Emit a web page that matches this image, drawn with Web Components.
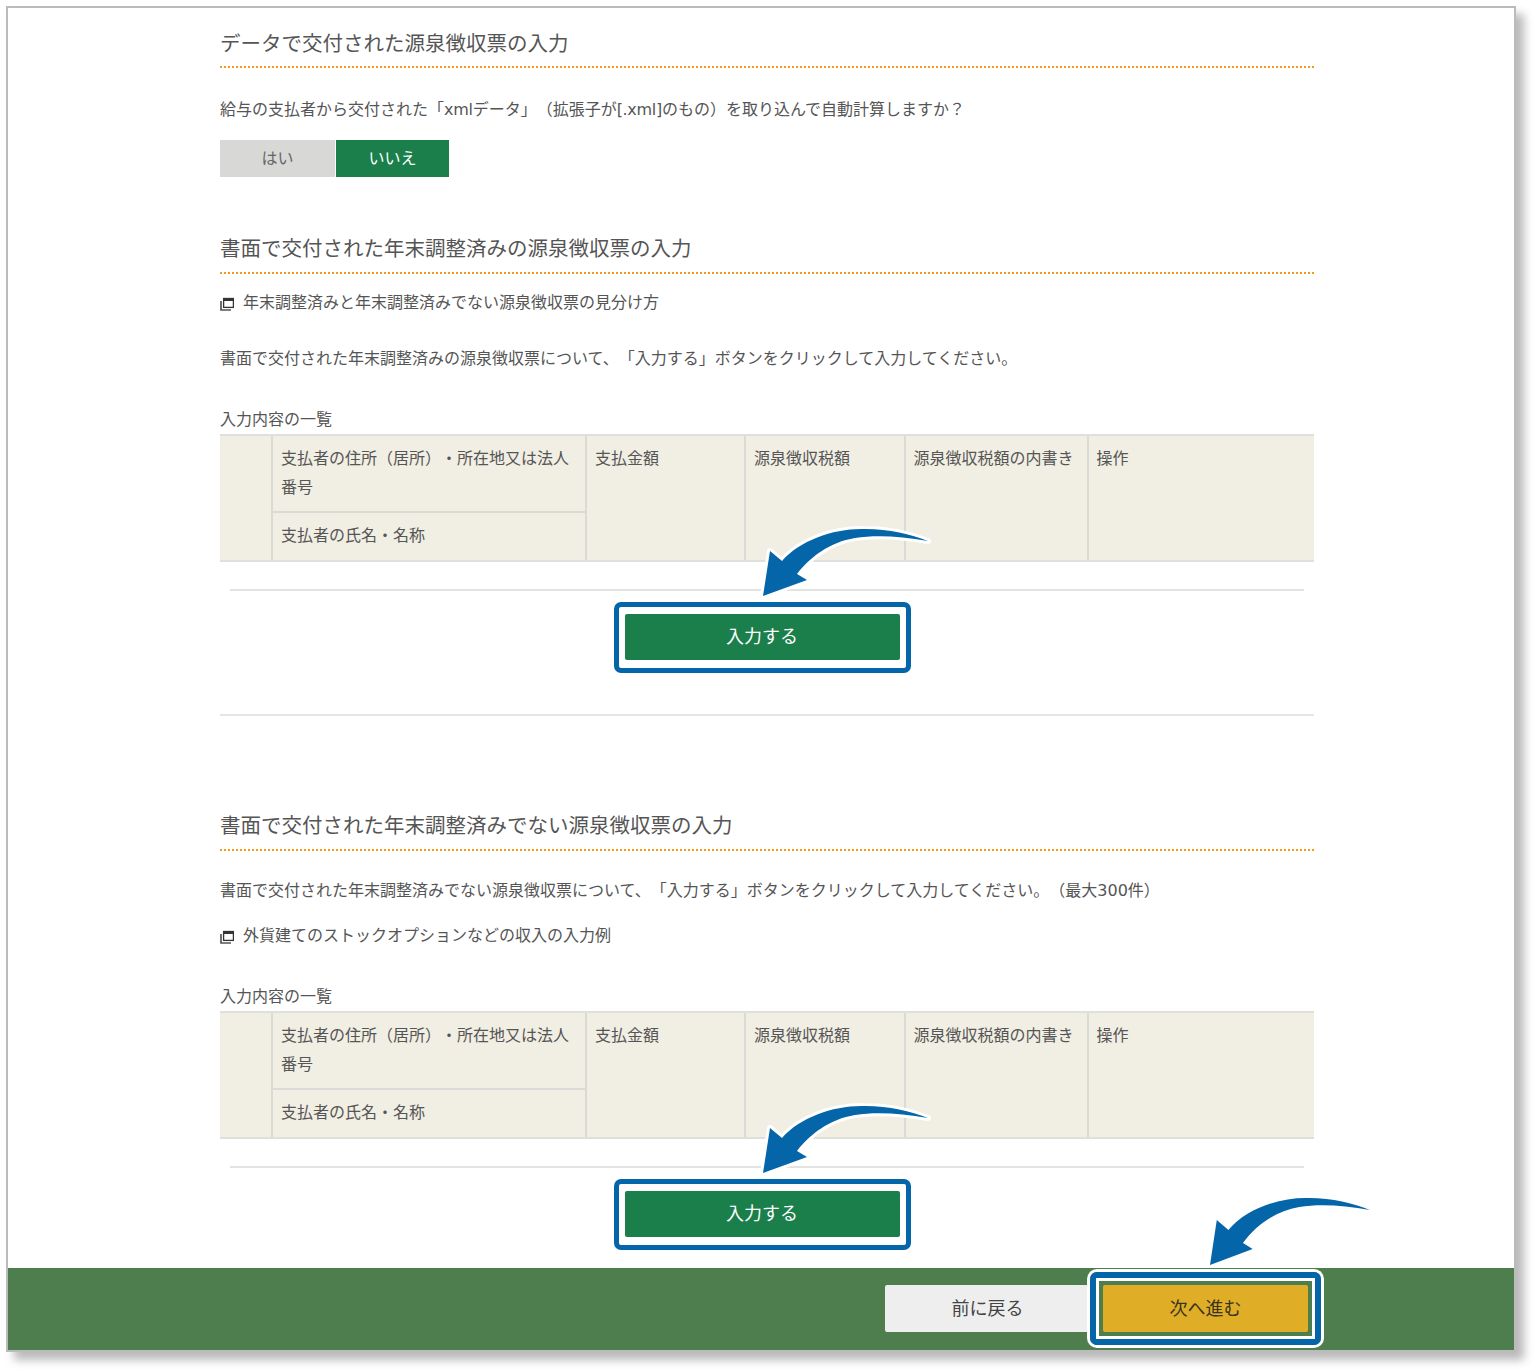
<!DOCTYPE html>
<html lang="ja">
<head>
<meta charset="utf-8">
<title>源泉徴収票の入力</title>
<style>
  html, body { margin: 0; padding: 0; background: #fff; min-height: 1370px; }
  body { font-family: "Noto Sans CJK JP", "Noto Sans", sans-serif; font-size: 16px; color: #555; overflow: hidden; text-spacing-trim: space-all; }
  .lat { font-family: "DejaVu Sans", sans-serif; line-height: 0; }
  .tight { letter-spacing: -.3px; }
  .first { padding-bottom: 9px; }
  .mt15 { margin-top: 15px; }
  .mt20 { margin-top: 20px; }
  .mt21 { margin-top: 21px; }
  .mt26 { margin-top: 26px; }
  .mt28 { margin-top: 28px; }
  .mt32 { margin-top: 32px; }
  .mt37 { margin-top: 37px; }
  .mt55 { margin-top: 55px; }
  .mt93 { margin-top: 93px; }
</style>
</head>
<body>

<template id="arrow-tpl">
  <svg width="190" height="84" viewBox="0 0 190 84" aria-hidden="true">
    <path class="edge" d="M8 74 L15 29 L27 39 C45 18 80 6 110 7 C135 7 155 12 173 19 C145 14 120 13 100 16 C75 20 55 35 42 52 L52 58 Z"/>
    <path class="fill" d="M8 74 L15 29 L27 39 C45 18 80 6 110 7 C135 7 155 12 173 19 C145 14 120 13 100 16 C75 20 55 35 42 52 L52 58 Z"/>
  </svg>
</template>

<app-frame>
  <sec-title class="first">データで交付された源泉徴収票の入力</sec-title>
  <body-text class="mt28">給与の支払者から交付された「<span class="lat tight">xml</span>データ」（拡張子が<span class="lat tight">[.xml]</span>のもの）を取り込んで自動計算しますか？</body-text>
  <yes-no class="mt20"></yes-no>

  <sec-title class="mt55">書面で交付された年末調整済みの源泉徴収票の入力</sec-title>
  <info-link class="mt15">年末調整済みと年末調整済みでない源泉徴収票の見分け方</info-link>
  <body-text class="mt32">書面で交付された年末調整済みの源泉徴収票について、「入力する」ボタンをクリックして入力してください。</body-text>
  <list-table class="mt37"></list-table>
  <add-entry></add-entry>
  <hr-line></hr-line>

  <sec-title class="mt93">書面で交付された年末調整済みでない源泉徴収票の入力</sec-title>
  <body-text class="mt26">書面で交付された年末調整済みでない源泉徴収票について、「入力する」ボタンをクリックして入力してください。（最大<span class="lat">300</span>件）</body-text>
  <info-link class="mt21">外貨建てのストックオプションなどの収入の入力例</info-link>
  <list-table class="mt37"></list-table>
  <add-entry></add-entry>

  <foot-bar slot="footer"></foot-bar>
</app-frame>

<script>
class AppFrame extends HTMLElement {
  constructor() {
    super();
    this.attachShadow({ mode: 'open' });
  }
  connectedCallback() {
    this.shadowRoot.innerHTML = `
    <style>
      :host {
        display: block;
        width: 1506px;
        height: 1342px;
        margin: 6px 0 0 6px;
        border: 2px solid #bbb;
        background: #fff;
        box-shadow: 8px 8px 9px rgba(0,0,0,.28);
      }
      .wrap { display: flex; flex-direction: column; height: 100%; }
      main { flex: 1; padding: 19px 200px 0 212px; min-height: 0; }
    </style>
    <div class="wrap">
      <main><slot></slot></main>
      <slot name="footer"></slot>
    </div>`;
  }
}

class SecTitle extends HTMLElement {
  constructor() {
    super();
    this.attachShadow({ mode: 'open' });
    this.shadowRoot.innerHTML = `
    <style>
      :host {
        display: block;
        padding-bottom: 10px;
        border-bottom: 2px dotted #f39a1e;
        font-size: 20.5px;
        line-height: 30px;
        color: #555;
      }
    </style>
    <slot></slot>`;
  }
}

class BodyText extends HTMLElement {
  constructor() {
    super();
    this.attachShadow({ mode: 'open' });
    this.shadowRoot.innerHTML = `
    <style>
      :host { display: block; font-size: 16px; line-height: 24px; white-space: nowrap; }
    </style>
    <slot></slot>`;
  }
}

class InfoLink extends HTMLElement {
  constructor() {
    super();
    this.attachShadow({ mode: 'open' });
    this.shadowRoot.innerHTML = `
    <style>
      :host { display: flex; align-items: center; gap: 9px; font-size: 16px; line-height: 24px; }
      svg { flex: none; margin: 5px 0 0 0; }
    </style>
    <svg width="14" height="14" viewBox="0 0 14 14" aria-hidden="true">
      <rect x="3.6" y="1.5" width="9.8" height="8.9" fill="#fff" stroke="#333" stroke-width="1.3"/>
      <rect x="3" y="1" width="11" height="3" fill="#333"/>
      <path d="M1 4 V13 H11" fill="none" stroke="#555" stroke-width="1.7"/>
    </svg>
    <span><slot></slot></span>`;
  }
}

class YesNo extends HTMLElement {
  constructor() {
    super();
    this.attachShadow({ mode: 'open' });
    this.shadowRoot.innerHTML = `
    <style>
      :host { display: flex; gap: 1px; height: 37px; font-size: 16px; }
      div { display: flex; align-items: center; justify-content: center; padding-bottom: 4px; box-sizing: border-box; }
      .no { width: 115px; background: #d8d8d6; color: #666; }
      .yes { width: 113px; background: #1b7f4c; color: #fff; }
    </style>
    <div class="no">はい</div><div class="yes">いいえ</div>`;
  }
}

class ListTable extends HTMLElement {
  constructor() {
    super();
    this.attachShadow({ mode: 'open' });
    this.shadowRoot.innerHTML = `
    <style>
      :host { display: block; font-size: 16px; }
      .cap { line-height: 24px; margin-bottom: 4px; }
      .grid {
        display: grid;
        grid-template-columns: 51px 314px 159px 159.5px 183px 1fr;
        grid-template-rows: 77px 47px;
        background: #f1eee3;
        border-top: 2px solid #dfdfdb;
        border-bottom: 2px solid #dfdfdb;
        line-height: 29px;
      }
      .grid > div { padding: 7px 8px 0; border-left: 2px solid #dadad6; box-sizing: border-box; }
      .grid > .blank { border-left: 0; grid-row: 1 / 3; grid-column: 1; }
      .grid > .tall { grid-row: 1 / 3; }
      .grid > .addr { grid-row: 1; grid-column: 2; border-bottom: 2px solid #dadad6; padding-right: 14px; }
      .grid > .name { grid-row: 2; grid-column: 2; }
    </style>
    <div class="cap">入力内容の一覧</div>
    <div class="grid">
      <div class="blank"></div>
      <div class="addr">支払者の住所（居所）・所在地又は法人番号</div>
      <div class="name">支払者の氏名・名称</div>
      <div class="tall">支払金額</div>
      <div class="tall">源泉徴収税額</div>
      <div class="tall">源泉徴収税額の内書き</div>
      <div class="tall">操作</div>
    </div>`;
  }
}

class CurveArrow extends HTMLElement {
  constructor() {
    super();
    this.attachShadow({ mode: 'open' });
    this.shadowRoot.innerHTML = `
    <style>
      :host { display: block; width: 190px; height: 84px; }
      svg { display: block; overflow: visible; }
      .edge { fill: #fff; stroke: #fff; stroke-width: 6px; stroke-linejoin: round; }
      .fill { fill: #0465a9; }
      :host([plain]) .edge { display: none; }
      :host([plain]) svg { transform: scaleX(.97); transform-origin: 8px 74px; }
    </style>`;
    this.shadowRoot.appendChild(document.getElementById('arrow-tpl').content.cloneNode(true));
  }
}

class AddEntry extends HTMLElement {
  constructor() {
    super();
    this.attachShadow({ mode: 'open' });
    this.shadowRoot.innerHTML = `
    <style>
      :host { display: block; position: relative; margin-top: 27px; }
      .rule { height: 2px; margin: 0 10px; background: #e3e3e3; }
      .row { display: flex; justify-content: center; padding: 11px 10px 0 0; }
      .ring {
        width: 297px;
        height: 71px;
        box-sizing: border-box;
        border: 5px solid #0465a9;
        border-radius: 7px;
        padding: 7px 6px 8px;
      }
      button {
        display: block;
        width: 100%;
        height: 100%;
        border: 0;
        border-radius: 2px;
        padding: 0 0 4px;
        background: #1b7f4c;
        color: #fff;
        font: inherit;
        font-size: 18px;
      }
      curve-arrow { position: absolute; left: 535px; top: -67px; }
    </style>
    <div class="rule"></div>
    <div class="row"><div class="ring"><button>入力する</button></div></div>
    <curve-arrow></curve-arrow>`;
  }
}

class HrLine extends HTMLElement {
  constructor() {
    super();
    this.attachShadow({ mode: 'open' });
    this.shadowRoot.innerHTML = `
    <style>
      :host { display: block; height: 2px; margin-top: 41px; background: #e6e6e6; }
    </style>`;
  }
}

class FootBar extends HTMLElement {
  constructor() {
    super();
    this.attachShadow({ mode: 'open' });
    this.shadowRoot.innerHTML = `
    <style>
      :host {
        display: flex;
        justify-content: flex-end;
        align-items: flex-start;
        gap: 13px;
        position: relative;
        height: 82px;
        box-sizing: border-box;
        padding: 17px 206px 0 0;
        background: #4e7d4e;
        font-size: 18px;
      }
      button { display: block; font: inherit; border: 0; height: 47px; padding: 0 0 3px; border-radius: 2px; color: #444; }
      .back { width: 205px; background: #eeeeee; }
      /* highlight rings hang over the bar around the next button */
      .halo { margin: -16px; border: 3px solid #fff; border-radius: 10px; position: relative; }
      .band { border: 6px solid #0465a9; border-radius: 7px; }
      .gap { border: 3px solid #fff; padding: 4px; background: #4e7d4e; }
      .next { width: 205px; background: #dfad26; color: #3a3320; }
      curve-arrow { position: absolute; right: 122px; top: -77px; }
    </style>
    <button class="back">前に戻る</button>
    <div class="halo"><div class="band"><div class="gap"><button class="next">次へ進む</button></div></div></div>
    <curve-arrow plain></curve-arrow>`;
  }
}

customElements.define('app-frame', AppFrame);
customElements.define('sec-title', SecTitle);
customElements.define('body-text', BodyText);
customElements.define('info-link', InfoLink);
customElements.define('yes-no', YesNo);
customElements.define('list-table', ListTable);
customElements.define('curve-arrow', CurveArrow);
customElements.define('add-entry', AddEntry);
customElements.define('hr-line', HrLine);
customElements.define('foot-bar', FootBar);
</script>
</body>
</html>
